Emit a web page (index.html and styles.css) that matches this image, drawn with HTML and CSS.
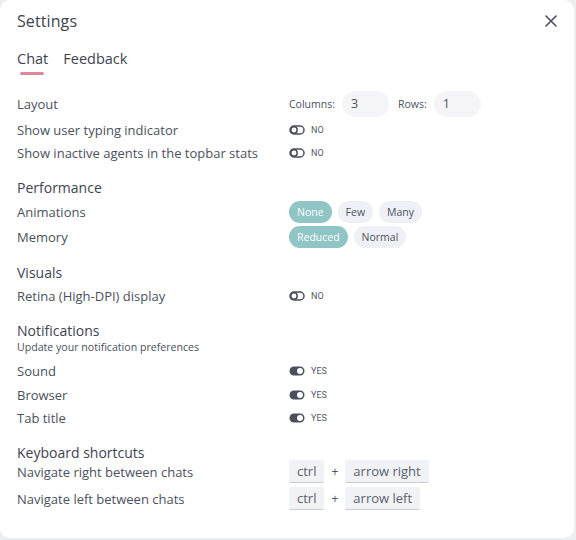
FILE: index.html
```html
<!DOCTYPE html>
<html>
<head>
<meta charset="utf-8">
<link rel="stylesheet" href="styles.css">
</head>
<body>
<div class="modal">
  <div class="header">
    <h1 class="title">Settings</h1>
    <button class="close" aria-label="Close">
      <svg width="12" height="12" viewBox="0 0 12 12"><path d="M1 1L11 11M11 1L1 11" stroke="#4a4f5c" stroke-width="1.6" stroke-linecap="round"/></svg>
    </button>
  </div>
  <div class="tabs">
    <div class="tab active">Chat</div>
    <div class="tab">Feedback</div>
  </div>

  <div class="section first">
    <div class="row row-layout">
      <div class="label">Layout</div>
      <div class="ctrl">
        <span class="small-label">Columns:</span>
        <span class="input">3</span>
        <span class="small-label rows">Rows:</span>
        <span class="input">1</span>
      </div>
    </div>
    <div class="row">
      <div class="label">Show user typing indicator</div>
      <div class="ctrl"><svg class="tg" width="16" height="10" viewBox="0 0 16 10"><rect x="1" y="1" width="14" height="8" rx="4" fill="none" stroke="#4a4f5c" stroke-width="1.5"/><circle cx="5" cy="5" r="3.2" fill="none" stroke="#4a4f5c" stroke-width="1.5"/></svg><span class="state">NO</span></div>
    </div>
    <div class="row">
      <div class="label">Show inactive agents in the topbar stats</div>
      <div class="ctrl"><svg class="tg" width="16" height="10" viewBox="0 0 16 10"><rect x="1" y="1" width="14" height="8" rx="4" fill="none" stroke="#4a4f5c" stroke-width="1.5"/><circle cx="5" cy="5" r="3.2" fill="none" stroke="#4a4f5c" stroke-width="1.5"/></svg><span class="state">NO</span></div>
    </div>
  </div>

  <div class="section">
    <h2 class="heading">Performance</h2>
    <div class="row row-pills">
      <div class="label">Animations</div>
      <div class="ctrl pills"><span class="pill on">None</span><span class="pill">Few</span><span class="pill">Many</span></div>
    </div>
    <div class="row row-pills">
      <div class="label">Memory</div>
      <div class="ctrl pills"><span class="pill on">Reduced</span><span class="pill">Normal</span></div>
    </div>
  </div>

  <div class="section section-visuals">
    <h2 class="heading">Visuals</h2>
    <div class="row">
      <div class="label">Retina (High-DPI) display</div>
      <div class="ctrl"><svg class="tg" width="16" height="10" viewBox="0 0 16 10"><rect x="1" y="1" width="14" height="8" rx="4" fill="none" stroke="#4a4f5c" stroke-width="1.5"/><circle cx="5" cy="5" r="3.2" fill="none" stroke="#4a4f5c" stroke-width="1.5"/></svg><span class="state">NO</span></div>
    </div>
  </div>

  <div class="section">
    <h2 class="heading heading-sub">Notifications</h2>
    <p class="sub">Update your notification preferences</p>
    <div class="row">
      <div class="label">Sound</div>
      <div class="ctrl"><svg class="tg" width="16" height="10" viewBox="0 0 16 10"><rect x="0.5" y="0.5" width="15" height="9" rx="4.5" fill="#4a4f5c"/><circle cx="11" cy="5" r="3" fill="#fff"/></svg><span class="state">YES</span></div>
    </div>
    <div class="row">
      <div class="label">Browser</div>
      <div class="ctrl"><svg class="tg" width="16" height="10" viewBox="0 0 16 10"><rect x="0.5" y="0.5" width="15" height="9" rx="4.5" fill="#4a4f5c"/><circle cx="11" cy="5" r="3" fill="#fff"/></svg><span class="state">YES</span></div>
    </div>
    <div class="row">
      <div class="label">Tab title</div>
      <div class="ctrl"><svg class="tg" width="16" height="10" viewBox="0 0 16 10"><rect x="0.5" y="0.5" width="15" height="9" rx="4.5" fill="#4a4f5c"/><circle cx="11" cy="5" r="3" fill="#fff"/></svg><span class="state">YES</span></div>
    </div>
  </div>

  <div class="section">
    <h2 class="heading heading-kbd">Keyboard shortcuts</h2>
    <div class="row row-kbd">
      <div class="label">Navigate right between chats</div>
      <div class="ctrl"><kbd>ctrl</kbd><span class="plus">+</span><kbd>arrow right</kbd></div>
    </div>
    <div class="row row-kbd">
      <div class="label">Navigate left between chats</div>
      <div class="ctrl"><kbd>ctrl</kbd><span class="plus">+</span><kbd>arrow left</kbd></div>
    </div>
  </div>
</div>
</body>
</html>
```

FILE: styles.css
```css
* { box-sizing: border-box; }
html, body {
  margin: 0;
  padding: 0;
  background: #eceef2;
}
body {
  width: 576px;
  height: 540px;
  font-family: "Open Sans", "Noto Sans", sans-serif;
  color: #4b505d;
}
.modal {
  width: 574px;
  height: 538px;
  background: #fff;
  border-radius: 10px;
  padding: 0 0 0 17px;
}
.header {
  display: flex;
  justify-content: space-between;
  align-items: center;
  height: 42px;
  padding-right: 17px;
}
.title {
  margin: 0;
  font-size: 16px;
  font-weight: 400;
  color: #3e4351;
  letter-spacing: 0.1px;
}
.close {
  border: 0;
  background: none;
  padding: 0;
  width: 12px;
  height: 12px;
  display: flex;
}
.tabs {
  display: flex;
  gap: 15px;
  height: 48px;
  padding-top: 7px;
}
.tab {
  font-size: 14.5px;
  color: #3e4351;
  position: relative;
  height: 23px;
}
.tab.active::after {
  content: "";
  position: absolute;
  left: 3px;
  right: 4px;
  bottom: -3px;
  height: 3px;
  border-radius: 2px;
  background: #e0899c;
}
.section {
  margin-top: 12px;
}
.section.first {
  margin-top: 0;
}
.section-visuals {
  margin-top: 13px;
}
.heading {
  margin: 0 0 1px;
  height: 21px;
  line-height: 21px;
  font-size: 14px;
  font-weight: 500;
  color: #3e4351;
}
.heading-sub {
  margin-bottom: 0;
}
.heading-kbd {
  margin-bottom: -5px;
}
.sub {
  margin: -1px 0 6px;
  font-size: 10.6px;
  line-height: 14px;
  color: #4b505d;
}
.row {
  display: grid;
  grid-template-columns: 272px 1fr;
  align-items: center;
  height: 23.5px;
}
.row-layout {
  height: 28px;
}
.row-pills {
  height: 25px;
}
.row-kbd {
  height: 27px;
}
.label {
  font-size: 13px;
  color: #4b505d;
}
.ctrl {
  display: flex;
  align-items: center;
}
.small-label {
  font-size: 10.5px;
  color: #4b505d;
  margin-right: 7px;
}
.small-label.rows {
  margin-left: 9px;
}
.input {
  width: 47px;
  height: 26px;
  border-radius: 13px;
  background: #f5f5f8;
  font-size: 12.5px;
  line-height: 26px;
  padding-left: 9px;
  color: #4b505d;
}
.tg {
  display: block;
}
.state {
  font-family: "Roboto", "Liberation Sans", sans-serif;
  font-size: 9px;
  margin-left: 6px;
  color: #555a66;
}
.pills {
  gap: 6px;
}
.pill {
  height: 22px;
  line-height: 22px;
  padding: 0 8px;
  border-radius: 11px;
  background: #eff0f5;
  font-size: 10.5px;
  color: #4b505d;
}
.pill.on {
  background: #8fc5c5;
  color: #fff;
}
kbd {
  font-family: "Open Sans", "Noto Sans", sans-serif;
  font-size: 13px;
  color: #5a5f6c;
  background: #f1f2f6;
  border-bottom: 1.5px solid #c9ccd5;
  border-radius: 2px;
  height: 23px;
  line-height: 22px;
  padding: 0 8px;
}
.plus {
  font-size: 12px;
  margin: 0 7px;
  color: #4b505d;
}
```
